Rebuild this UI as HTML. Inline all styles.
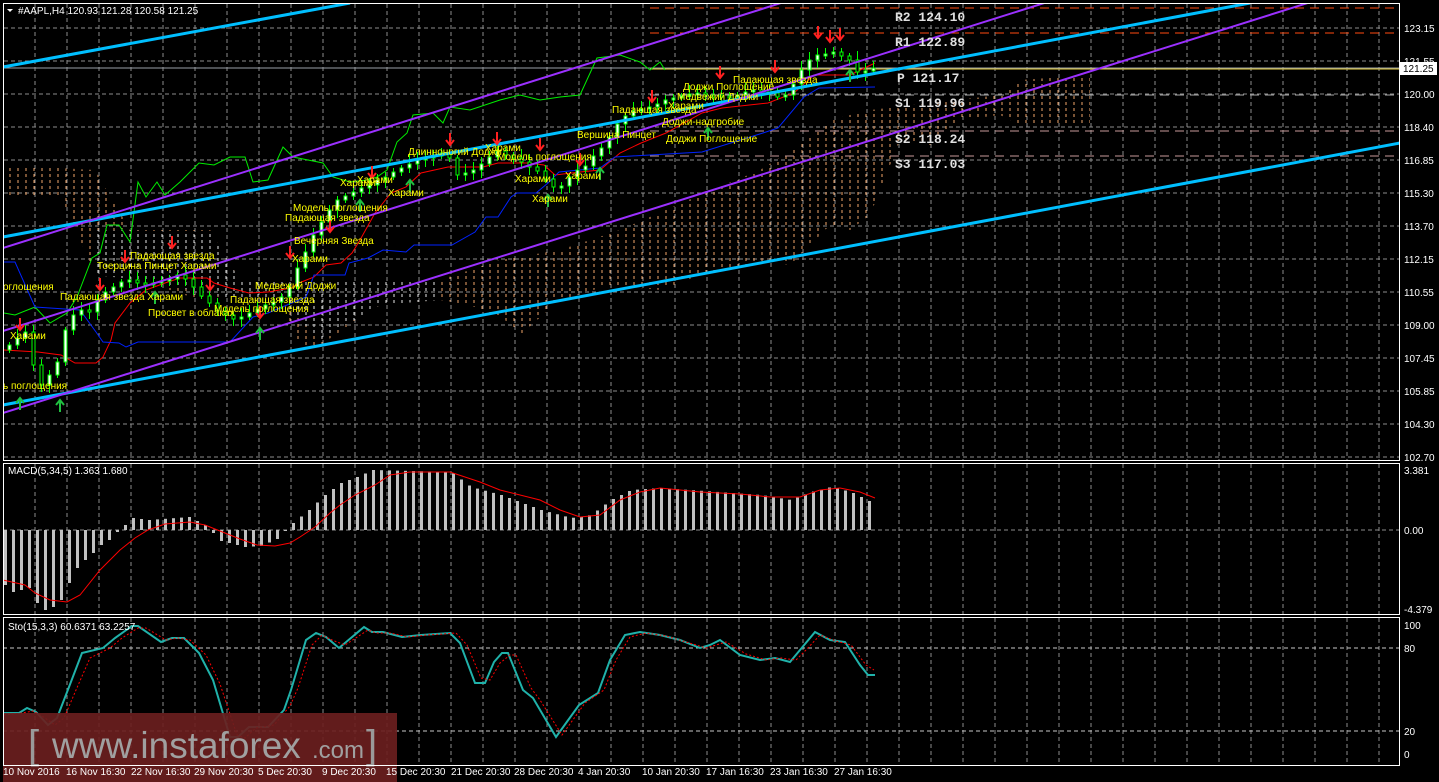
<!DOCTYPE html>
<html><head><meta charset="utf-8"><style>
html,body{margin:0;padding:0;background:#000;width:1439px;height:782px;overflow:hidden}
svg{display:block}
.ax{font:10px "Liberation Sans",sans-serif;fill:#fff}
.lb{font:10px "Liberation Sans Narrow","Liberation Sans",sans-serif;fill:#ffff00}
.pv{font:bold 13px "Liberation Mono",monospace;fill:#e0e0e0}
</style></head><body>
<svg id="s" width="1439" height="782" xmlns="http://www.w3.org/2000/svg">
<defs>
<pattern id="cl" width="8" height="6" patternUnits="userSpaceOnUse"><line x1="2" y1="0" x2="2" y2="3" stroke="#f2a66a" stroke-width="1"/></pattern>
<pattern id="cw" width="8" height="6" patternUnits="userSpaceOnUse"><line x1="2" y1="0" x2="2" y2="3" stroke="#e8e8e8" stroke-width="1"/></pattern>
<clipPath id="cm"><rect x="4" y="4" width="1396" height="456"/></clipPath>
<clipPath id="cmacd"><rect x="4" y="464" width="1396" height="150"/></clipPath>
<clipPath id="cst"><rect x="4" y="618" width="1396" height="147"/></clipPath>
</defs>
<g id="grid" stroke="#8c8c8c" stroke-dasharray="4,3" stroke-width="1"></g>
<g clip-path="url(#cm)">
<polygon fill="url(#cl)" points="3,165 95,170 130,230 210,230 240,280 300,280 440,280 500,260 560,250 620,230 700,195 760,170 800,145 830,120 870,110 1000,95 1020,80 1090,75 1090,125 1020,125 1000,115 960,120 930,145 900,140 870,215 850,230 830,225 800,255 790,265 770,262 700,275 660,290 610,285 560,300 520,335 505,320 470,305 440,300 380,305 320,345 300,345 280,300 240,300 200,300 140,280 95,275 60,195 3,195"/>
<polygon fill="url(#cw)" points="95,230 210,232 240,280 440,280 440,300 380,305 320,340 280,300 240,300 140,280 95,275"/>
<line x1="3" y1="68" x2="1400" y2="68" stroke="#9aa0a8"/>
<line x1="650" y1="69" x2="1400" y2="69" stroke="#e8d040"/>
<line x1="650" y1="8" x2="1400" y2="8" stroke="#ff4a10" stroke-dasharray="9,6"/>
<line x1="650" y1="33" x2="1400" y2="33" stroke="#ff4a10" stroke-dasharray="9,6"/>
<line x1="650" y1="95" x2="1400" y2="95" stroke="#a8a8a8" stroke-dasharray="9,6"/>
<line x1="650" y1="131" x2="1400" y2="131" stroke="#c89a9a" stroke-dasharray="9,6"/>
<line x1="650" y1="156" x2="1400" y2="156" stroke="#c89a9a" stroke-dasharray="9,6"/>
<polyline fill="none" stroke="#00ee00" stroke-width="1" points="4,313 15,315 35,307 50,323 67,313 77,297 92,258 100,253 107,225 119,225 130,242 138,182 146,197 157,182 165,195 180,182 199,163 214,165 230,157 245,157 253,182 268,180 283,147 293,157 323,163 333,177 350,182 367,180 377,177 387,170 397,142 407,133 413,115 433,113 443,123 450,107 470,110 500,100 520,95 540,100 560,97 580,95 597,58 620,55 640,62 650,70 660,62 665,70"/>
<polyline fill="none" stroke="#ff0000" points="3,350 38,352 61,355 75,363 96,363 103,357 111,340 115,323 130,303 146,290 165,283 180,278 207,278 214,283 230,288 249,293 268,292 291,288 299,283 314,277 326,265 341,263 352,253 360,240 375,213 391,193 406,187 421,173 448,167 483,167 498,163 528,163 544,165 555,175 580,172 600,170 620,153 641,143 666,133 702,113 722,108 768,103 794,93 814,75 850,75 875,63"/>
<polyline fill="none" stroke="#0022ff" points="3,262 15,262 35,307 50,308 80,310 96,332 103,342 119,343 126,347 138,342 230,342 253,317 268,313 306,297 314,275 345,275 349,263 368,258 383,250 406,252 414,245 452,245 475,232 486,217 498,217 511,197 517,193 536,193 548,183 559,172 600,168 615,157 702,152 763,133 778,128 804,97 819,88 875,87"/>
<g id="candles"></g>
<line x1="3" y1="67" x2="350" y2="3" stroke="#00bfff" stroke-width="3"/>
<line x1="3" y1="237" x2="1250" y2="3" stroke="#00bfff" stroke-width="3"/>
<line x1="3" y1="405" x2="1400" y2="143" stroke="#00bfff" stroke-width="3"/>
<line x1="3" y1="248" x2="800" y2="-3" stroke="#9b30ff" stroke-width="2"/>
<line x1="3" y1="331" x2="1400" y2="-109" stroke="#9b30ff" stroke-width="2"/>
<line x1="3" y1="413" x2="1400" y2="-26" stroke="#9b30ff" stroke-width="2"/>
<g id="arrows"></g>
<text class="lb" x="3" y="389">ь поглощения</text>
<text class="lb" x="10" y="339">Харами</text>
<text class="lb" x="3" y="290">оглощения</text>
<text class="lb" x="60" y="300">Падающая звезда Харами</text>
<text class="lb" x="130" y="259">Падающая звезда</text>
<text class="lb" x="97" y="269">Тоерцина Пинцет Харами</text>
<text class="lb" x="148" y="316">Просвет в облаках</text>
<text class="lb" x="230" y="303">Падающая звезда</text>
<text class="lb" x="214" y="312">Модель поглощения</text>
<text class="lb" x="255" y="289">Медвежий Доджи</text>
<text class="lb" x="292" y="262">Харами</text>
<text class="lb" x="294" y="244">Вечерняя Звезда</text>
<text class="lb" x="285" y="221">Падающая звезда</text>
<text class="lb" x="293" y="211">Модель поглощения</text>
<text class="lb" x="340" y="186">Харами</text>
<text class="lb" x="357" y="183">Харами</text>
<text class="lb" x="388" y="196">Харами</text>
<text class="lb" x="408" y="155">Длинноногий Доджи</text>
<text class="lb" x="485" y="151">Харами</text>
<text class="lb" x="497" y="160">Модель поглощения</text>
<text class="lb" x="515" y="182">Харами</text>
<text class="lb" x="532" y="202">Харами</text>
<text class="lb" x="565" y="179">Харами</text>
<text class="lb" x="577" y="138">Вершина Пинцет</text>
<text class="lb" x="612" y="113">Падающая звезда</text>
<text class="lb" x="668" y="109">Харами</text>
<text class="lb" x="677" y="100">Медвежий Доджи</text>
<text class="lb" x="683" y="90">Доджи Поглощение</text>
<text class="lb" x="733" y="83">Падающая звезда</text>
<text class="lb" x="662" y="125">Доджи-надгробие</text>
<text class="lb" x="666" y="142">Доджи Поглощение</text>
<text class="pv" x="895" y="21">R2 124.10</text>
<text class="pv" x="895" y="46">R1 122.89</text>
<text class="pv" x="897" y="82">P 121.17</text>
<text class="pv" x="895" y="107">S1 119.96</text>
<text class="pv" x="895" y="143">S2 118.24</text>
<text class="pv" x="895" y="168">S3 117.03</text>
</g>
<g clip-path="url(#cmacd)">
<line x1="3" y1="530" x2="1400" y2="530" stroke="#8c8c8c" stroke-dasharray="4,3"/>
<g id="macd"></g>
<polyline fill="none" stroke="#ff0000" points="3,580 25,585 35,593 50,600 67,602 80,595 100,570 110,560 120,550 135,538 148,530 165,524 190,522 205,525 220,531 240,539 257,545 275,546 290,543 300,537 315,527 330,513 340,505 355,495 375,485 390,475 410,472 450,472 480,482 500,490 540,500 560,510 580,517 600,515 620,500 640,492 660,488 700,492 740,494 770,497 800,497 820,490 840,488 860,492 875,498"/>
</g>
<g clip-path="url(#cst)">
<line x1="3" y1="648" x2="1400" y2="648" stroke="#c8c8c8" stroke-dasharray="4,3"/>
<line x1="3" y1="731" x2="1400" y2="731" stroke="#c8c8c8" stroke-dasharray="4,3"/>
<polyline fill="none" stroke="#20b2aa" stroke-width="2" points="4,713 19,713 27,708 36,712 48,725 57,718 69,687 82,653 103,648 115,638 132,626 138,626 161,642 172,638 184,638 199,653 213,680 230,737 238,737 249,727 268,727 284,710 291,690 306,640 316,633 326,637 339,648 364,627 372,632 383,632 402,637 421,635 450,633 460,643 475,683 485,683 494,662 502,653 508,653 523,690 533,698 556,737 579,705 598,693 610,660 625,635 640,632 660,635 680,640 700,648 710,645 720,640 740,655 760,660 775,658 790,662 800,650 815,632 830,640 845,642 860,665 868,675 875,675"/>
<polyline fill="none" stroke="#ff0000" stroke-dasharray="2,2" points="4,715 22,713 33,711 42,716 55,725 64,718 76,690 90,658 110,648 122,638 138,628 146,628 166,640 178,638 190,640 206,655 220,684 237,735 245,738 256,728 274,725 290,706 298,688 312,645 322,635 332,640 345,645 368,630 376,633 390,633 408,637 427,635 456,633 467,645 481,678 490,680 500,663 510,655 516,655 531,688 540,700 562,735 585,703 604,690 616,660 630,637 646,633 666,636 686,642 706,648 716,645 726,642 746,654 766,660 781,658 796,660 806,650 820,635 836,641 851,645 866,665 874,670"/>
</g>
<rect x="3" y="713" width="394" height="69" fill="#6a1e1e" opacity="0.92"/>
<text x="28" y="758" font-family="Liberation Sans, sans-serif" font-size="40" fill="#9a9a9a">[</text>
<text x="52" y="758" font-family="Liberation Sans, sans-serif" font-size="37" fill="#a0a0a0">www.instaforex</text>
<text x="312" y="758" font-family="Liberation Sans, sans-serif" font-size="24" fill="#a0a0a0">.com</text>
<text x="366" y="758" font-family="Liberation Sans, sans-serif" font-size="40" fill="#9a9a9a">]</text>
<g fill="none" stroke="#fff" stroke-width="1">
<rect x="3.5" y="3.5" width="1396" height="457"/>
<rect x="3.5" y="463.5" width="1396" height="151"/>
<rect x="3.5" y="617.5" width="1396" height="148"/>
</g>
<rect x="1400" y="62" width="37" height="13" fill="#fff"/>
<text x="1403" y="72" font-family="Liberation Sans, sans-serif" font-size="10" fill="#000">121.25</text>
<g class="ax">
<text x="1404" y="32">123.15</text><text x="1404" y="65">121.55</text><text x="1404" y="98">120.00</text><text x="1404" y="131">118.40</text><text x="1404" y="164">116.85</text><text x="1404" y="197">115.30</text><text x="1404" y="230">113.70</text><text x="1404" y="263">112.15</text><text x="1404" y="296">110.55</text><text x="1404" y="329">109.00</text><text x="1404" y="362">107.45</text><text x="1404" y="395">105.85</text><text x="1404" y="428">104.30</text><text x="1404" y="461">102.70</text>
<text x="1404" y="474">3.381</text><text x="1404" y="534">0.00</text><text x="1404" y="613">-4.379</text>
<text x="1404" y="629">100</text><text x="1404" y="652">80</text><text x="1404" y="735">20</text><text x="1404" y="758">0</text>
<text x="3" y="775">10 Nov 2016</text><text x="66" y="775">16 Nov 16:30</text><text x="131" y="775">22 Nov 16:30</text><text x="194" y="775">29 Nov 20:30</text><text x="258" y="775">5 Dec 20:30</text><text x="322" y="775">9 Dec 20:30</text><text x="386" y="775">15 Dec 20:30</text><text x="451" y="775">21 Dec 20:30</text><text x="514" y="775">28 Dec 20:30</text><text x="578" y="775">4 Jan 20:30</text><text x="642" y="775">10 Jan 20:30</text><text x="706" y="775">17 Jan 16:30</text><text x="770" y="775">23 Jan 16:30</text><text x="834" y="775">27 Jan 16:30</text>
<text x="8" y="474">MACD(5,34,5) 1.363 1.680</text>
<text x="8" y="630">Sto(15,3,3) 60.6371 63.2257</text>
<text x="18" y="14">#AAPL,H4  120.93 121.28 120.58 121.25</text>
</g>
<polygon points="7,9 13,9 10,12" fill="#fff"/>
</svg>
<script>
(function(){
var NS="http://www.w3.org/2000/svg";
function el(p,t,a){var e=document.createElementNS(NS,t);for(var k in a)e.setAttribute(k,a[k]);p.appendChild(e);return e;}
var g=document.getElementById('grid');
for(var x=35;x<1400;x+=32){el(g,'line',{x1:x,y1:4,x2:x,y2:460});el(g,'line',{x1:x,y1:464,x2:x,y2:614});el(g,'line',{x1:x,y1:618,x2:x,y2:765});}
for(var y=28;y<460;y+=33){el(g,'line',{x1:4,y1:y,x2:1400,y2:y});}
var C=[345,338,332,365,385,375,362,330,315,310,312,300,292,287,282,280,283,285,283,281,279,275,279,287,296,303,311,315,319,317,313,309,305,302,297,287,268,252,235,222,210,200,196,192,188,185,180,177,172,168,164,160,158,156,153,158,175,173,170,164,157,151,155,158,162,167,171,179,187,186,177,170,166,156,148,137,124,116,111,109,107,104,100,98,96,94,93,95,95,96,97,95,92,90,90,93,97,95,84,70,60,55,54,52,56,60,72,71,68];
var cg=document.getElementById('candles');var prev=350;
for(var i=0;i<C.length;i++){var xx=8+8*i;var cl=C[i];var op=prev;var tp=Math.min(op,cl),bt=Math.max(op,cl);if(bt-tp<2)bt=tp+2;
el(cg,'line',{x1:xx+1.5,y1:tp-3-((i*13)%7),x2:xx+1.5,y2:bt+3+((i*7)%6),stroke:'#00ff00'});
el(cg,'rect',{x:xx,y:tp,width:3,height:bt-tp,fill:(cl<op?'#fff':'#000'),stroke:'#00ff00','stroke-width':1});prev=cl;}
var A=[[20,330,0],[100,290,0],[125,262,0],[172,248,0],[210,290,0],[260,318,0],[290,258,0],[330,232,0],[372,178,0],[450,145,0],[497,144,0],[540,150,0],[580,165,0],[652,102,0],[720,78,0],[775,72,0],[818,38,0],[830,42,0],[840,40,0],[20,398,1],[60,400,1],[155,292,1],[260,328,1],[360,200,1],[410,180,1],[548,195,1],[600,168,1],[708,128,1],[850,70,1]];
var ag=document.getElementById('arrows');
A.forEach(function(a){var ax=a[0],ay=a[1];if(!a[2]){el(ag,'path',{d:'M'+ax+' '+(ay-12)+'V'+ay+'M'+(ax-4)+' '+(ay-5)+'L'+ax+' '+ay+'L'+(ax+4)+' '+(ay-5),stroke:'#ff2020','stroke-width':2,fill:'none'});}else{el(ag,'path',{d:'M'+ax+' '+(ay+12)+'V'+ay+'M'+(ax-4)+' '+(ay+5)+'L'+ax+' '+ay+'L'+(ax+4)+' '+(ay+5),stroke:'#20c040','stroke-width':2,fill:'none'});}});
function interp(pts,px){for(var j=0;j<pts.length-1;j++){if(px>=pts[j][0]&&px<=pts[j+1][0]){var t=(px-pts[j][0])/(pts[j+1][0]-pts[j][0]);return pts[j][1]+t*(pts[j+1][1]-pts[j][1]);}}return pts[pts.length-1][1];}
var M=[[4,585],[12,592],[20,590],[28,588],[36,603],[44,610],[52,607],[60,600],[68,583],[76,568],[84,560],[92,553],[100,545],[108,540],[116,532],[124,525],[132,518],[148,520],[188,517],[204,525],[220,541],[244,547],[260,546],[276,539],[292,523],[308,510],[324,495],[340,483],[356,477],[372,470],[450,472],[470,487],[500,495],[540,510],[570,518],[590,515],[610,500],[630,490],[660,488],[760,495],[790,500],[810,492],[830,487],[850,492],[872,503]];
var mg=document.getElementById('macd');
for(var mx=4;mx<=872;mx+=8){var v=interp(M,mx);var t2=Math.min(v,530),h=Math.abs(v-530);if(h<1)h=1;el(mg,'rect',{x:mx,y:t2,width:3,height:h,fill:'#c0c0c0'});}
})();
</script>
</body></html>
